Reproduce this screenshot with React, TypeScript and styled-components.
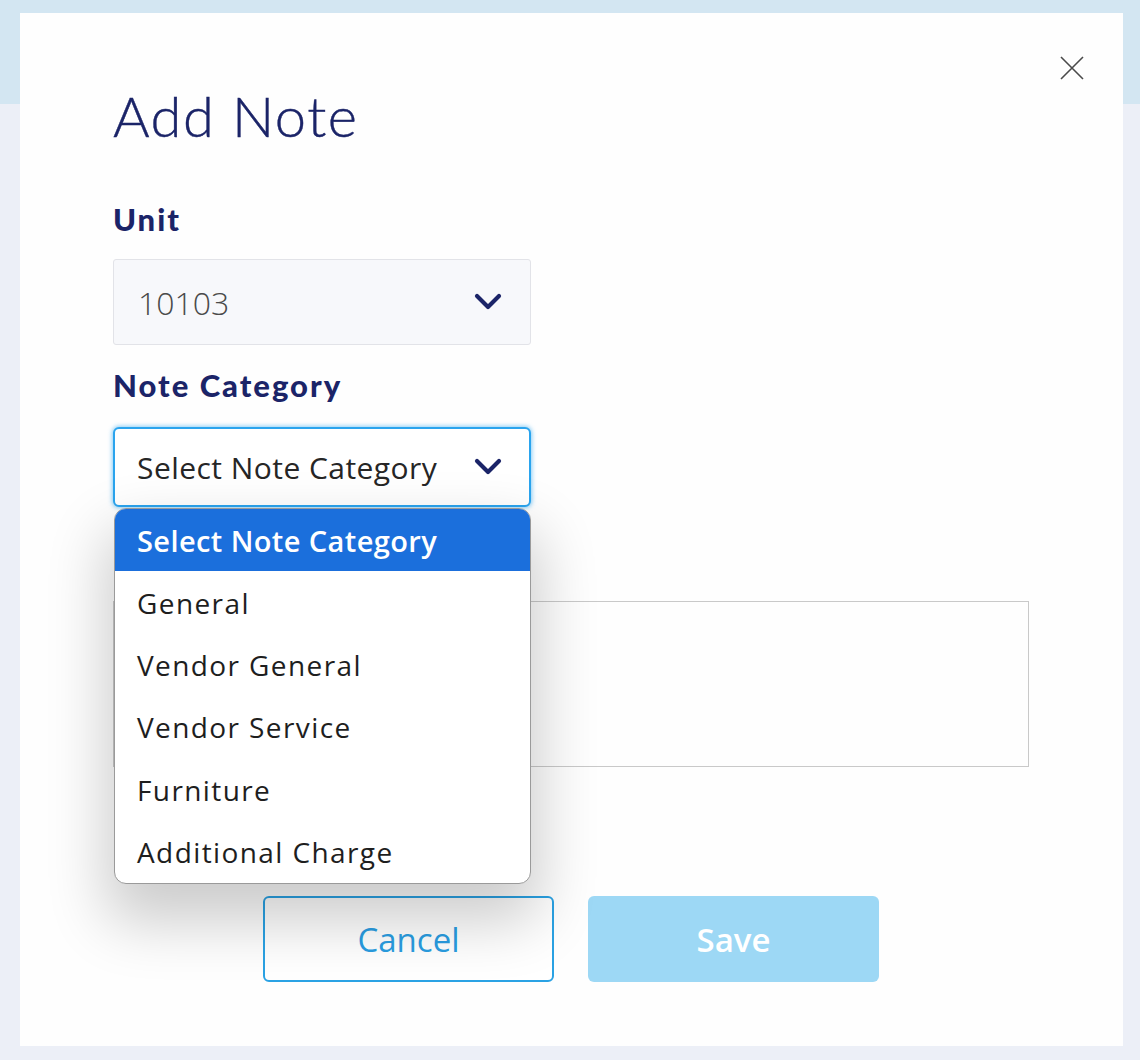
import styled, { createGlobalStyle } from "styled-components";

const GlobalStyle = createGlobalStyle`
  html, body {
    margin: 0;
    padding: 0;
  }
  body {
    font-family: "Open Sans", "Noto Sans", sans-serif;
    background: linear-gradient(to bottom, #d3e6f2 0, #d3e6f2 104px, #eceff7 104px);
    min-height: 1060px;
  }
`;

const Page = styled.div`
  padding: 13px 17px 14px 20px;
`;

const Modal = styled.div`
  position: relative;
  background: #fefefe;
  width: 1103px;
  box-sizing: border-box;
  padding: 71px 94px 64px 93px;
  display: flex;
  flex-direction: column;
`;

const CloseButton = styled.button`
  position: absolute;
  top: 42px;
  right: 38px;
  width: 26px;
  height: 26px;
  padding: 0;
  border: none;
  background: none;
  display: flex;
  align-items: center;
  justify-content: center;
  cursor: pointer;
`;

const Title = styled.h1`
  margin: 0;
  font-family: "Lato", sans-serif;
  font-weight: 300;
  font-size: 56px;
  line-height: 64px;
  color: #1b2468;
  letter-spacing: 1.5px;
  -webkit-text-stroke: 0.4px #1b2468;
`;

const Label = styled.label<{ $top: number }>`
  display: block;
  margin-top: ${(p) => p.$top}px;
  font-family: "Lato", sans-serif;
  font-weight: 900;
  font-size: 31px;
  line-height: 36px;
  letter-spacing: 2px;
  color: #1b2468;
`;

const SelectBox = styled.div<{ $focused?: boolean; $top: number }>`
  position: relative;
  margin-top: ${(p) => p.$top}px;
  width: 418px;
  box-sizing: border-box;
  height: ${(p) => (p.$focused ? 80 : 86)}px;
  display: flex;
  align-items: center;
  justify-content: space-between;
  padding: ${(p) => (p.$focused ? "0 27px 0 22px" : "0 28px 0 24px")};
  border-radius: ${(p) => (p.$focused ? 6 : 3)}px;
  border: ${(p) => (p.$focused ? "2px solid #2aa4ee" : "1px solid #e2e3e8")};
  background: ${(p) => (p.$focused ? "#ffffff" : "#f7f8fb")};
  box-shadow: ${(p) => (p.$focused ? "0 0 4px 1px rgba(42, 164, 238, 0.55)" : "none")};
`;

const SelectValue = styled.span<{ $size: number; $muted?: boolean }>`
  font-size: ${(p) => p.$size}px;
  font-weight: ${(p) => (p.$muted ? 300 : 400)};
  letter-spacing: ${(p) => (p.$muted ? 0 : 0.45)}px;
  color: ${(p) => (p.$muted ? "#4a4a4a" : "#262626")};
`;

const Menu = styled.ul`
  position: absolute;
  z-index: 5;
  top: calc(100% + 3px);
  left: -1px;
  width: 417px;
  box-sizing: border-box;
  margin: 0;
  padding: 0;
  list-style: none;
  background: #ffffff;
  border: 1px solid #9a9a9a;
  border-radius: 12px;
  overflow: hidden;
  box-shadow: 0 30px 60px 8px rgba(0, 0, 0, 0.2);
`;

const MenuItem = styled.li<{ $active?: boolean }>`
  height: 62.4px;
  display: flex;
  align-items: center;
  padding-left: 22px;
  font-size: ${(p) => (p.$active ? 29 : 28)}px;
  font-weight: ${(p) => (p.$active ? 600 : 400)};
  letter-spacing: ${(p) => (p.$active ? 0.4 : 1.4)}px;
  color: ${(p) => (p.$active ? "#ffffff" : "#1e1e1e")};
  background: ${(p) => (p.$active ? "#1b6fdc" : "transparent")};
`;

const TextArea = styled.div`
  margin-top: 94px;
  height: 166px;
  box-sizing: border-box;
  border: 1px solid #c9c9c9;
  background: #fefefe;
`;

const ButtonRow = styled.div`
  margin-top: 129px;
  display: flex;
  justify-content: center;
  gap: 34px;
`;

const Button = styled.button<{ $primary?: boolean }>`
  width: 291px;
  height: 86px;
  box-sizing: border-box;
  border-radius: 6px;
  font-family: "Open Sans", sans-serif;
  font-size: 33px;
  font-weight: ${(p) => (p.$primary ? 600 : 400)};
  color: ${(p) => (p.$primary ? "#ffffff" : "#2a9de2")};
  background: ${(p) => (p.$primary ? "#9dd8f5" : "#ffffff")};
  border: ${(p) => (p.$primary ? "none" : "2px solid #2aa2e4")};
  cursor: pointer;
`;

const Chevron = () => (
  <svg width="28" height="18" viewBox="0 0 28 18" fill="none">
    <path
      d="M3 3 L14 14 L25 3"
      stroke="#1b2468"
      strokeWidth="4.2"
      strokeLinecap="round"
      strokeLinejoin="round"
    />
  </svg>
);

const CloseIcon = () => (
  <svg width="26" height="26" viewBox="0 0 26 26">
    <path d="M2 2 L24 24 M24 2 L2 24" stroke="#4a4a4a" strokeWidth="1.6" />
  </svg>
);

const categories = [
  "Select Note Category",
  "General",
  "Vendor General",
  "Vendor Service",
  "Furniture",
  "Additional Charge",
];

export default function App() {
  return (
    <Page>
      <GlobalStyle />
      <Modal>
        <CloseButton aria-label="Close">
          <CloseIcon />
        </CloseButton>
        <Title>Add Note</Title>

        <Label $top={53}>Unit</Label>
        <SelectBox $top={22}>
          <SelectValue $size={32} $muted>
            10103
          </SelectValue>
          <Chevron />
        </SelectBox>

        <Label $top={22}>Note Category</Label>
        <SelectBox $focused $top={24}>
          <SelectValue $size={30}>Select Note Category</SelectValue>
          <Chevron />
          <Menu>
            {categories.map((c, i) => (
              <MenuItem key={c} $active={i === 0}>
                {c}
              </MenuItem>
            ))}
          </Menu>
        </SelectBox>

        <TextArea />

        <ButtonRow>
          <Button>Cancel</Button>
          <Button $primary>Save</Button>
        </ButtonRow>
      </Modal>
    </Page>
  );
}
